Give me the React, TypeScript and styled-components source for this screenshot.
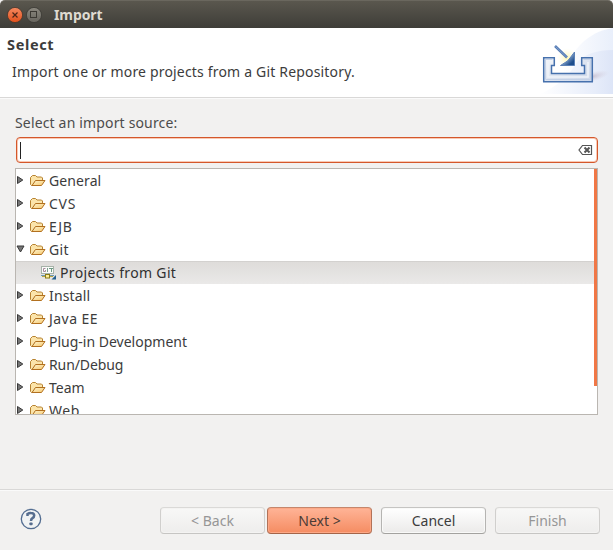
import React from "react";
import styled, { createGlobalStyle, css } from "styled-components";

const GlobalStyle = createGlobalStyle`
  * { box-sizing: border-box; }
  body { margin: 0; background: #f2f1f0; }
`;

const Dialog = styled.div`
  width: 613px;
  height: 550px;
  display: flex;
  flex-direction: column;
  overflow: hidden;
  background: #f2f1f0;
  color: #3c3c3c;
  font: 14px/20px "Noto Sans", "Open Sans", sans-serif;
  white-space: nowrap;
`;

const TitleBar = styled.header`
  flex: none;
  height: 28px;
  display: flex;
  align-items: center;
  padding: 1px 0 0 7px;
  border-radius: 5px 5px 0 0;
  border-top: 1px solid #6a675e;
  background: linear-gradient(#5a574e, #3e3d38);
  svg { flex: none; margin-right: 3px; }
`;

const WindowTitle = styled.h1`
  margin: 0 0 0 9px;
  font-size: 14px;
  font-weight: 700;
  letter-spacing: -0.1px;
  color: #dfdbd2;
`;

const Banner = styled.section`
  flex: none;
  height: 70px;
  display: flex;
  justify-content: space-between;
  background: #fff;
  border-bottom: 1px solid #d9d8d7;
`;

const BannerText = styled.div`
  padding: 6px 0 0 7px;
`;

const Heading = styled.h2`
  margin: 0 0 8px;
  font-size: 14.5px;
  line-height: 20px;
  font-weight: 700;
  letter-spacing: 0.65px;
`;

const Tracked = styled.span<{ $track?: number }>`
  letter-spacing: ${(p) => p.$track ?? 0}px;
`;

const Description = styled.p`
  margin: 0 0 0 5px;
`;

const Body = styled.main`
  flex: 1;
  padding: 14px 15px 0;
  border-top: 1px solid #fafafa;
`;

const FieldLabel = styled.label`
  display: block;
  height: 24px;
  line-height: 20px;
  color: #4c4c4c;
`;

const SearchField = styled.div`
  width: 582px;
  height: 26px;
  margin-left: 1px;
  display: flex;
  align-items: center;
  justify-content: space-between;
  padding: 0 4px 0 3px;
  border: 1px solid #d4572b;
  border-radius: 4px;
  background: #fff;
  box-shadow: inset 0 0 0 1px #f9c9b4;
`;

const Caret = styled.span`
  width: 1px;
  height: 17px;
  background: #222;
`;

const Tree = styled.div`
  width: 583px;
  height: 247px;
  margin-top: 5px;
  display: flex;
  align-items: flex-start;
  border: 1px solid #bab6b1;
  background: #fff;
  overflow: hidden;
`;

const Rows = styled.ul`
  flex: 1;
  margin: 0;
  padding: 0;
  list-style: none;
`;

const Row = styled.li<{ $selected?: boolean }>`
  height: 23px;
  display: flex;
  align-items: center;
  padding-left: ${(p) => (p.$selected ? 25 : 0)}px;
  ${(p) =>
    p.$selected &&
    css`
      background: linear-gradient(#dedcda, #eae9e8);
      border-top: 1px solid #d3d1cf;
      color: #303030;
    `}
  svg { flex: none; }
`;

const FolderSlot = styled.span`
  display: flex;
  margin: 0 3px 0 5px;
`;

const ItemSlot = styled.span`
  display: flex;
  margin-right: 3px;
`;

const ScrollThumb = styled.div`
  flex: none;
  width: 3px;
  height: 217px;
  background: #f07746;
`;

const Footer = styled.footer`
  flex: none;
  height: 61px;
  display: flex;
  align-items: flex-start;
  padding: 17px 13px 0 20px;
  border-top: 1px solid #d9d8d7;
  box-shadow: inset 0 1px #fafafa;
`;

const HelpSlot = styled.div`
  width: 140px;
  padding-top: 1px;
`;

type Kind = "normal" | "primary" | "disabled";

const Button = styled.button<{ $kind: Kind; $gap?: number }>`
  width: 105px;
  height: 27px;
  margin: 0 0 0 ${(p) => p.$gap ?? 0}px;
  padding: 1px 0 0;
  border-radius: 4px;
  border: 1px solid;
  font: inherit;
  line-height: 20px;
  ${(p) =>
    p.$kind === "primary"
      ? css`
          color: #4b3b35;
          border-color: #c5866c #b27258 #a56448;
          background: linear-gradient(#ffb497, #f58c62);
          box-shadow: inset 0 0 0 1px #fda886;
        `
      : p.$kind === "disabled"
        ? css`
            color: #969696;
            border-color: #dad9d7 #d0cfcd #c6c5c3;
            background: linear-gradient(#f8f8f7, #eeedec);
            box-shadow: inset 0 0 0 1px #f4f3f2;
          `
        : css`
            color: #3c3c3c;
            border-color: #c5c4c2 #b5b4b2 #a3a29f;
            background: linear-gradient(#ffffff, #ebeae9);
            box-shadow: inset 0 0 0 1px #f9f9f8;
          `}
`;

const CloseIcon = () => (
  <svg width="16" height="16" viewBox="0 0 16 16">
    <defs>
      <linearGradient id="close" x2="0" y2="1">
        <stop stopColor="#f58a61" />
        <stop offset="1" stopColor="#e2501b" />
      </linearGradient>
    </defs>
    <circle cx="8" cy="8" r="7.6" fill="url(#close)" stroke="#45362c" strokeWidth=".8" />
    <path d="M5.500 5.500l5 5m0-5l-5 5" stroke="#4d2618" strokeWidth="1.200" />
  </svg>
);

const MaximizeIcon = () => (
  <svg width="16" height="16" viewBox="0 0 16 16">
    <defs>
      <linearGradient id="maximize" x2="0" y2="1">
        <stop stopColor="#8b887f" />
        <stop offset="1" stopColor="#66645d" />
      </linearGradient>
    </defs>
    <circle cx="8" cy="8" r="7.600" fill="url(#maximize)" stroke="#3a3933" strokeWidth=".8" />
    <rect x="4.500" y="4.500" width="6" height="6" fill="none" stroke="#3b3933" />
  </svg>
);

const ImportArt = () => (
  <svg width="100" height="69" viewBox="0 0 100 69">
    <defs>
      <linearGradient id="sky" x1="0" x2="1">
        <stop stopColor="#fff" />
        <stop offset="1" stopColor="#e9effb" />
      </linearGradient>
      <linearGradient id="skyLow" x1="0" x2="1">
        <stop stopColor="#fff" />
        <stop offset=".75" stopColor="#e7edfa" />
        <stop offset="1" stopColor="#dde5f7" />
      </linearGradient>
      <linearGradient id="tray" x2="1" y2="1">
        <stop stopColor="#f4f7fb" />
        <stop offset=".5" stopColor="#dde4f0" />
        <stop offset="1" stopColor="#cbd6ea" />
      </linearGradient>
      <linearGradient id="arrow" x2="1" y2="1">
        <stop offset=".3" stopColor="#b8cde8" />
        <stop offset=".8" stopColor="#1d4d8c" />
      </linearGradient>
      <radialGradient id="glow">
        <stop stopColor="#fff7b0" />
        <stop offset="1" stopColor="#fffbe0" stopOpacity="0" />
      </radialGradient>
      <radialGradient id="shadow">
        <stop stopColor="#b5a9bd" stopOpacity=".7" />
        <stop offset="1" stopColor="#d8d0dc" stopOpacity="0" />
      </radialGradient>
    </defs>
    <path d="M48 50C57 24 73 4 100 0V66H48Z" fill="url(#sky)" />
    <path d="M27 66Q52 55 64 34Q76 22 100 22V66Z" fill="url(#skyLow)" />
    <ellipse cx="78" cy="49" rx="19" ry="5" transform="rotate(-14 78 49)" fill="url(#shadow)" />
    <circle cx="54" cy="30" r="10" fill="url(#glow)" />
    <path d="M30.700 29.700H41.300V37.500H38.500V45.500H71.500V37.500H68.700V29.700H79.300V53.700H30.700Z" fill="url(#tray)" stroke="#4671ad" strokeWidth="1.500" />
    <path d="M32.500 31.500H39.500M32.500 31V51.500H77.500V31.500H70.500" fill="none" stroke="#c4d1e6" />
    <path d="M35 34V49H75V34" fill="none" stroke="#eff3f9" strokeWidth="1.500" />
    <path d="M42 18L54 29.500" stroke="#557cb5" strokeWidth="2.600" />
    <path d="M42.500 18.500L54 29.500" stroke="#88a5cf" strokeWidth=".8" />
    <path d="M61.500 24V37.500H47.500L54.500 33L57 30Z" fill="url(#arrow)" stroke="#5a80b6" />
  </svg>
);

const ClearIcon = () => (
  <svg width="15" height="12" viewBox="0 0 15 12">
    <path d="M4.500 1.500H13.500V10.500H4.500L1 6Z" fill="#fff" stroke="#555" strokeWidth="1.200" />
    <path d="M6.500 3.500l5 5m0-5l-5 5" stroke="#555" strokeWidth="2" />
  </svg>
);

const Expander = ({ open }: { open?: boolean }) => (
  <svg width="9" height="14" viewBox="0 0 9 14">
    {open ? (
      <path d="M1 3H8L4.500 9Z" fill="#777" stroke="#393939" />
    ) : (
      <path d="M1.500 2.500V9.500L6.800 6Z" fill="#777" stroke="#393939" />
    )}
  </svg>
);

const FolderIcon = () => (
  <svg width="16" height="14" viewBox="0 0 16 14">
    <defs>
      <linearGradient id="folder" x2="1" y2="1">
        <stop stopColor="#fff7d4" />
        <stop offset="1" stopColor="#f5c568" />
      </linearGradient>
    </defs>
    <path d="M1.500 11.500L.5 10.500V3.500L2.500 1.500H5.500L7 3H11.500L12.500 4V6.500H6L2.500 11.500Z" fill="#fbe4aa" stroke="#b78230" />
    <path d="M2 11.500L5.500 6.500H15L11.500 11.500Z" fill="url(#folder)" stroke="#b2701f" />
  </svg>
);

const GitIcon = () => (
  <svg width="16" height="16" viewBox="0 0 16 16">
    <rect x=".5" y="1.500" width="12" height="7" fill="#fbfcfa" stroke="#a7b2a8" />
    <path d="M4.500 3.500H2.500V6.500H4.500V5" fill="none" stroke="#a58a9c" />
    <path d="M6.500 3V7" stroke="#7da08f" />
    <path d="M8 3.500H12M10.500 3.500V7" fill="none" stroke="#6f9a84" />
    <path d="M0 10.500H13" stroke="#6d98b3" />
    <path d="M1 11.500H12" stroke="#b5a43d" />
    <rect x="4.500" y="9.500" width="4" height="3.500" fill="#ffef9a" stroke="#8b7b17" />
    <path d="M15 10V14.500H10.500Z" fill="#24608e" />
  </svg>
);

const HelpIcon = () => (
  <svg width="22" height="22" viewBox="0 0 22 22">
    <circle cx="11" cy="11" r="9.700" fill="#f1f3f4" stroke="#536d91" strokeWidth="1.300" />
    <path d="M7.500 8V6Q9 4.900 11 5Q14.200 5 14.200 7.600Q14.200 9.200 12.500 10.200Q11 11.100 11 13" fill="none" stroke="#566d8f" strokeWidth="2.500" />
    <rect x="9.400" y="14.500" width="3.200" height="2.800" rx=".8" fill="#566d8f" />
  </svg>
);

interface Entry {
  name: string;
  track?: number;
  open?: boolean;
  item?: boolean;
}

const entries: Entry[] = [
  { name: "General", track: 0.1 },
  { name: "CVS", track: 0.7 },
  { name: "EJB", track: 0.7 },
  { name: "Git", track: 0.3, open: true },
  { name: "Projects from Git", track: 0.34, item: true },
  { name: "Install", track: 0.15 },
  { name: "Java EE", track: 0.45 },
  { name: "Plug-in Development" },
  { name: "Run/Debug", track: -0.1 },
  { name: "Team" },
  { name: "Web", track: 0.5 },
];

export default function App() {
  return (
    <>
      <GlobalStyle />
      <Dialog>
        <TitleBar>
          <CloseIcon />
          <MaximizeIcon />
          <WindowTitle>Import</WindowTitle>
        </TitleBar>
        <Banner>
          <BannerText>
            <Heading>Select</Heading>
            <Description>
              <Tracked $track={0.18}>Import one or more projects from a Git Repository.</Tracked>
            </Description>
          </BannerText>
          <ImportArt />
        </Banner>
        <Body>
          <FieldLabel>
            <Tracked $track={0.16}>Select an import source:</Tracked>
          </FieldLabel>
          <SearchField>
            <Caret />
            <ClearIcon />
          </SearchField>
          <Tree>
            <Rows>
              {entries.map((e) => (
                <Row key={e.name} $selected={e.item}>
                  {e.item ? (
                    <ItemSlot><GitIcon /></ItemSlot>
                  ) : (
                    <>
                      <Expander open={e.open} />
                      <FolderSlot><FolderIcon /></FolderSlot>
                    </>
                  )}
                  <Tracked $track={e.track}>{e.name}</Tracked>
                </Row>
              ))}
            </Rows>
            <ScrollThumb />
          </Tree>
        </Body>
        <Footer>
          <HelpSlot><HelpIcon /></HelpSlot>
          <Button $kind="disabled" disabled>&lt; Back</Button>
          <Button $kind="primary" $gap={2}>Next &gt;</Button>
          <Button $kind="normal" $gap={9}>Cancel</Button>
          <Button $kind="disabled" $gap={9} disabled>Finish</Button>
        </Footer>
      </Dialog>
    </>
  );
}
